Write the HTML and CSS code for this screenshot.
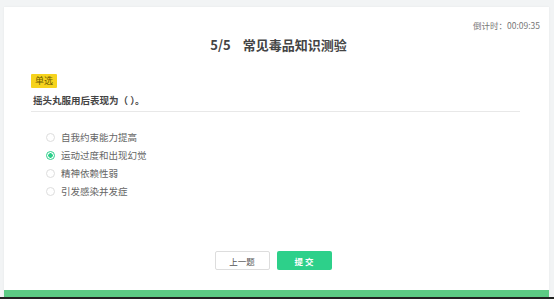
FILE: index.html
```html
<!DOCTYPE html>
<html lang="zh-CN">
<head>
  <meta charset="UTF-8">
  <meta name="viewport" content="width=device-width, initial-scale=1.0">
  <title>常见毒品知识测验</title>
  <link rel="stylesheet" href="styles.css">
</head>
<body>

<div class="page">
  <div class="card">
    <div class="timer">倒计时：00:09:35</div>
    <h2 class="title"><span class="num">5/5</span>常见毒品知识测验</h2>

    <div class="question">
      <span class="tag">单选</span>
      <p class="stem">摇头丸服用后表现为（ ）。</p>

      <ul class="options">
        <li><span class="radio"></span>自我约束能力提高</li>
        <li class="checked"><span class="radio"></span>运动过度和出现幻觉</li>
        <li><span class="radio"></span>精神依赖性弱</li>
        <li><span class="radio"></span>引发感染并发症</li>
      </ul>
    </div>

    <div class="actions">
      <button class="btn prev">上一题</button>
      <button class="btn submit">提 交</button>
    </div>

    <div class="bar"></div>
  </div>
  <div class="bottom-line"></div>
</div>

</body>
</html>
```

FILE: styles.css
```css
html, body {
  margin: 0;
  padding: 0;
}

body {
  font-family: "Noto Sans CJK SC", "Noto Sans", sans-serif;
  background-color: #f2f4f5;
  width: 554px;
  height: 299px;
  overflow: hidden;
}

.page {
  padding: 7px 5px 0 4px;
  height: 299px;
  box-sizing: border-box;
  display: flex;
  flex-direction: column;
}

.card {
  flex: 1;
  background-color: #fff;
  box-shadow: 0 0 2px rgba(0, 0, 0, 0.06);
  display: flex;
  flex-direction: column;
}

.timer {
  text-align: right;
  font-size: 8.5px;
  color: #777;
  padding: 13px 9px 0 0;
  line-height: 10px;
}

.title {
  margin: 5px 0 0;
  text-align: center;
  font-size: 13px;
  font-weight: bold;
  color: #444;
  line-height: 20px;
  padding-left: 4px;
}

.title .num {
  margin-right: 12px;
}

.question {
  padding: 10px 29px 0 27px;
}

.tag {
  display: inline-block;
  background-color: #f6d31d;
  color: #6b5a00;
  font-size: 9px;
  line-height: 14px;
  padding: 0 4px;
  border-radius: 1px;
}

.stem {
  margin: 3px 0 0;
  padding: 0 0 2px 2px;
  font-size: 9.5px;
  font-weight: bold;
  color: #444;
  line-height: 17px;
  border-bottom: 1px solid #e8e8e8;
}

.options {
  list-style: none;
  margin: 16px 0 0;
  padding: 0 0 0 15px;
}

.options li {
  display: flex;
  align-items: center;
  height: 18px;
  font-size: 9.5px;
  color: #666;
}

.radio {
  width: 7px;
  height: 7px;
  border: 1px solid #ddd;
  border-radius: 50%;
  margin-right: 6px;
  box-sizing: content-box;
}

.checked .radio {
  border-color: #2ccf8a;
  background: radial-gradient(circle, #2ccf8a 0 2px, #fff 2.5px);
}

.actions {
  margin-top: auto;
  display: flex;
  justify-content: center;
  gap: 7px;
  padding: 0 7px 20px 0;
}

.btn {
  width: 55px;
  height: 19px;
  font-family: inherit;
  font-size: 8.5px;
  border-radius: 2px;
  padding: 0;
  cursor: pointer;
}

.prev {
  background-color: #fff;
  border: 1px solid #ddd;
  color: #555;
}

.submit {
  background-color: #2dd08a;
  border: none;
  color: #fff;
  font-weight: bold;
}

.bar {
  height: 7px;
  background-color: #5ccb84;
}

.bottom-line {
  height: 2px;
  background-color: #222;
  margin: 0 -5px 0 -4px;
}
```
